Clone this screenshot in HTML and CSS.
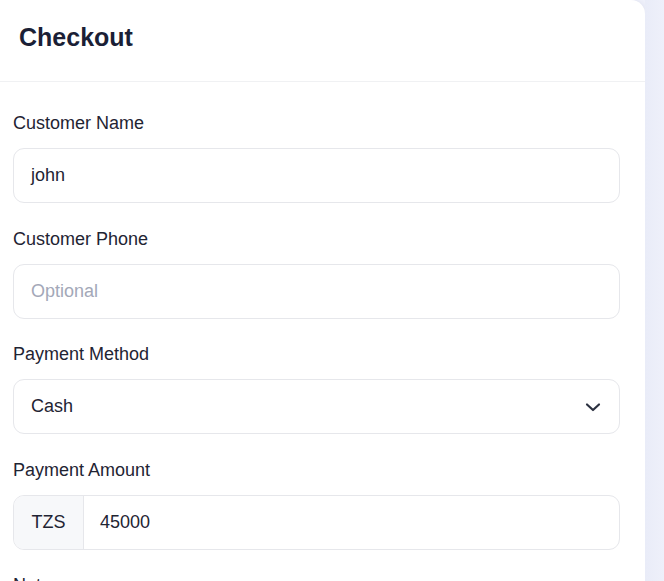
FILE: index.html
```html
<!DOCTYPE html>
<html lang="en">
<head>
<meta charset="utf-8">
<title>Checkout</title>
<link rel="stylesheet" href="styles.css">
</head>
<body>
<div class="page">
  <section class="card">
    <header class="card-header">
      <h1 class="title">Checkout</h1>
    </header>
    <form class="card-body">
      <div class="field">
        <label class="label">Customer Name</label>
        <div class="control"><span class="value">john</span></div>
      </div>
      <div class="field">
        <label class="label">Customer Phone</label>
        <div class="control"><span class="placeholder">Optional</span></div>
      </div>
      <div class="field">
        <label class="label">Payment Method</label>
        <div class="control select">
          <span class="value">Cash</span>
          <svg class="chevron" width="16" height="10" viewBox="0 0 16 10" aria-hidden="true">
            <path d="M2 2.5 L8 8 L14 2.5" fill="none" stroke="#2b3140" stroke-width="2.2" stroke-linecap="round" stroke-linejoin="round"/>
          </svg>
        </div>
      </div>
      <div class="field">
        <label class="label">Payment Amount</label>
        <div class="control group">
          <span class="addon">TZS</span>
          <span class="value amount">45000</span>
        </div>
      </div>
      <div class="field">
        <label class="label">Notes</label>
      </div>
    </form>
  </section>
  <aside class="side"></aside>
</div>
</body>
</html>
```
FILE: styles.css
```css
html, body {
  margin: 0;
  padding: 0;
}
body {
  background: #eef0fa;
  font-family: "Liberation Sans", Arial, sans-serif;
  color: #1f2433;
  overflow: hidden;
}
.page {
  display: flex;
  height: 581px;
}
.card {
  width: 645px;
  flex: none;
  background: #ffffff;
  border-top-right-radius: 14px;
  box-shadow: 1px 0 4px rgba(30, 40, 90, 0.06);
}
.side {
  flex: 1;
  background: linear-gradient(90deg, #e9ecf8 0%, #eef0fa 100%);
}
.card-header {
  padding: 25px 19px 0 19px;
  height: 56px;
  border-bottom: 1px solid #f0f1f3;
}
.title {
  margin: 0;
  font-size: 25px;
  line-height: 25px;
  font-weight: 700;
  color: #1b1f36;
}
.card-body {
  padding: 29px 25px 0 13px;
  display: flex;
  flex-direction: column;
  gap: 23.5px;
}
.field {
  display: flex;
  flex-direction: column;
}
.label {
  font-size: 18px;
  line-height: 24px;
  color: #1f2433;
  margin-bottom: 13px;
}
.control {
  height: 55px;
  box-sizing: border-box;
  border: 1px solid #e6e7eb;
  border-radius: 11px;
  display: flex;
  align-items: center;
  padding: 0 17px;
  font-size: 18px;
  background: #fff;
}
.value {
  color: #1f2433;
}
.placeholder {
  color: #a3a8b8;
}
.select {
  justify-content: space-between;
  padding-right: 17px;
}
.chevron {
  display: block;
  margin-right: 1px;
}
.group {
  padding: 0;
  overflow: hidden;
}
.addon {
  height: 100%;
  display: flex;
  align-items: center;
  padding: 0 16px 0 16px;
  background: #f7f8fa;
  border-right: 1px solid #e6e7eb;
  color: #1f2433;
  width: 70px;
  box-sizing: border-box;
  justify-content: center;
}
.amount {
  padding-left: 16px;
}
```
